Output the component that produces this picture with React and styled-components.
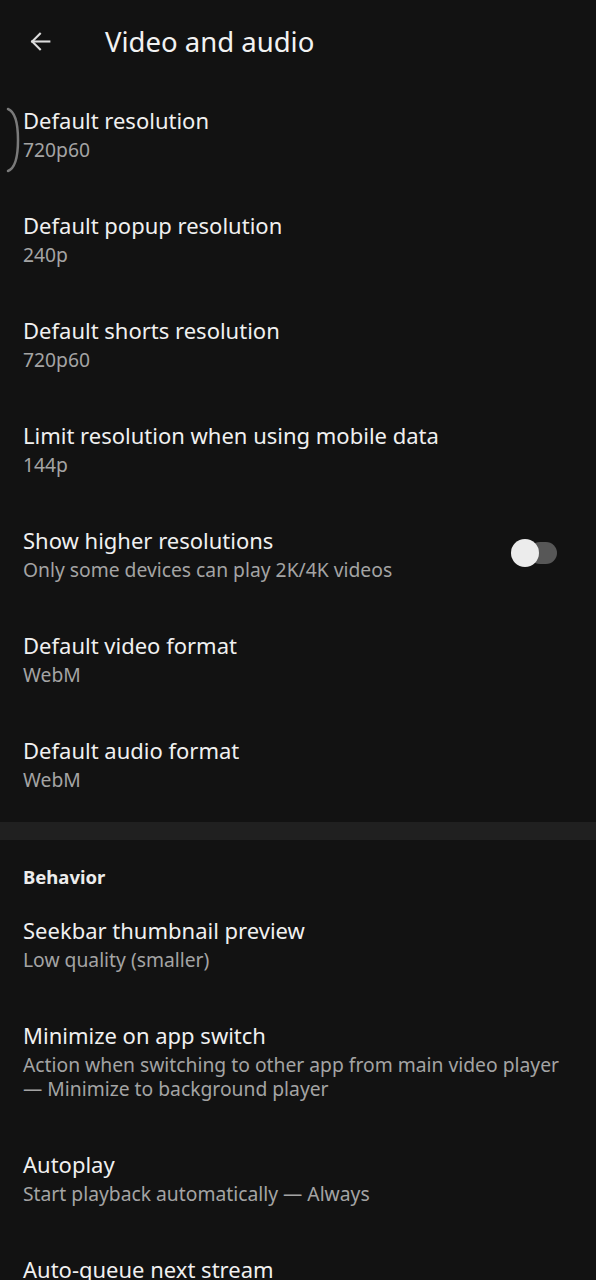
import styled, { createGlobalStyle } from "styled-components";

const GlobalStyle = createGlobalStyle`
	html, body {
		margin: 0;
		padding: 0;
		background: #121212;
	}
	body {
		font-family: "Noto Sans", "Open Sans", sans-serif;
		color: #f0f0f0;
	}
`;

const Screen = styled.div`
	position: relative;
	width: 596px;
	height: 1280px;
	background: #121212;
	overflow: hidden;
`;

const TopBar = styled.header`
	display: flex;
	align-items: center;
	height: 82px;
	padding-left: 28px;
`;

const BackButton = styled.button`
	display: flex;
	align-items: center;
	justify-content: center;
	width: 25px;
	height: 25px;
	padding: 0;
	margin-right: 52px;
	border: 0;
	background: none;
	color: #dcdcdc;
	cursor: pointer;
`;

const PageTitle = styled.h1`
	margin: 0;
	font-size: 27.5px;
	font-weight: 400;
	color: #f2f2f2;
`;

const Item = styled.div`
	display: flex;
	align-items: center;
	padding: 21px 23px 25px 23px;
`;

const ItemText = styled.div`
	flex: 1;
	display: flex;
	flex-direction: column;
`;

const ItemTitle = styled.div`
	font-size: 22px;
	line-height: 35px;
	color: #f0f0f0;
`;

const ItemSummary = styled.div`
	font-size: 19.3px;
	line-height: 24px;
	color: #a4a4a4;
`;

const Divider = styled.div`
	height: 18px;
	margin-top: 5px;
	background: #202020;
`;

const Category = styled.div`
	padding: 25px 23px 3px;
	font-size: 18.5px;
	line-height: 24px;
	font-weight: 700;
	color: #ececec;
`;

const Track = styled.div`
	position: relative;
	width: 46px;
	height: 28px;
	margin-right: 16px;
	flex-shrink: 0;
`;

const TrackBar = styled.div`
	position: absolute;
	left: 18px;
	right: 0;
	top: 3px;
	height: 22px;
	border-radius: 11px;
	background: ${(p) => (p.$on ? "#8ab4f8" : "#575757")};
`;

const Thumb = styled.div`
	position: absolute;
	left: ${(p) => (p.$on ? "18px" : "0")};
	top: 0;
	width: 28px;
	height: 28px;
	border-radius: 50%;
	background: #ececec;
`;

const EdgeGlow = styled.svg`
	position: absolute;
	left: 5px;
	top: 107px;
`;

function Switch({ on }) {
	return (
		<Track>
			<TrackBar $on={on} />
			<Thumb $on={on} />
		</Track>
	);
}

function Pref({ title, summary, toggle }) {
	return (
		<Item>
			<ItemText>
				<ItemTitle>{title}</ItemTitle>
				{summary && <ItemSummary>{summary}</ItemSummary>}
			</ItemText>
			{toggle && <Switch on={false} />}
		</Item>
	);
}

export default function App() {
	return (
		<Screen>
			<GlobalStyle />
			<TopBar>
				<BackButton aria-label="Back">
					<svg width="25" height="25" viewBox="0 0 24 24" fill="none" stroke="currentColor" strokeWidth="2" strokeLinecap="square">
						<path d="M20.5 12H4" />
						<path d="M11.5 4.5L4 12l7.5 7.5" />
					</svg>
				</BackButton>
				<PageTitle>Video and audio</PageTitle>
			</TopBar>

			<EdgeGlow width="16" height="66" viewBox="0 0 16 66">
				<path d="M3 2 Q13 6 13 33 Q13 60 3 64" fill="none" stroke="#7a7a7a" strokeWidth="2.5" strokeLinecap="round" />
			</EdgeGlow>

			<Pref title="Default resolution" summary="720p60" />
			<Pref title="Default popup resolution" summary="240p" />
			<Pref title="Default shorts resolution" summary="720p60" />
			<Pref title="Limit resolution when using mobile data" summary="144p" />
			<Pref title="Show higher resolutions" summary="Only some devices can play 2K/4K videos" toggle />
			<Pref title="Default video format" summary="WebM" />
			<Pref title="Default audio format" summary="WebM" />

			<Divider />
			<Category>Behavior</Category>

			<Pref title="Seekbar thumbnail preview" summary="Low quality (smaller)" />
			<Pref
				title="Minimize on app switch"
				summary="Action when switching to other app from main video player — Minimize to background player"
			/>
			<Pref title="Autoplay" summary="Start playback automatically — Always" />
			<Pref title="Auto-queue next stream" />
		</Screen>
	);
}
